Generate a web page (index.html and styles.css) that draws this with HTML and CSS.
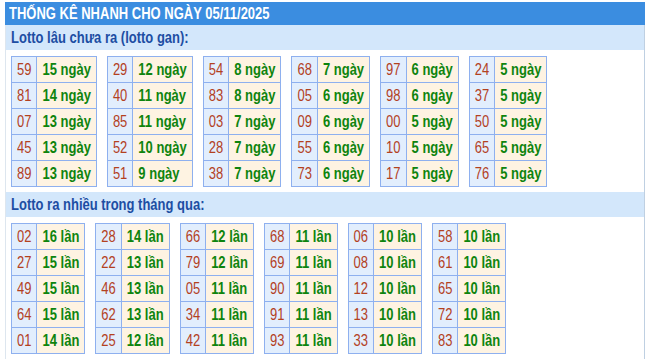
FILE: index.html
```html
<!DOCTYPE html>
<html lang="vi">
<head>
<meta charset="utf-8">
<title>Thống kê nhanh</title>
<link rel="stylesheet" href="styles.css">
</head>
<body>
<div class="box">
  <div class="title"><span class="s">THỐNG KÊ NHANH CHO NGÀY 05/11/2025</span></div>
  <div class="sub"><span class="s">Lotto lâu chưa ra (lotto gan):</span></div>
  <div class="tables">
    <table class="t"><tr><td class="n"><span class="s">59</span></td><td class="v"><span class="s">15 ngày</span></td></tr><tr><td class="n"><span class="s">81</span></td><td class="v"><span class="s">14 ngày</span></td></tr><tr><td class="n"><span class="s">07</span></td><td class="v"><span class="s">13 ngày</span></td></tr><tr><td class="n"><span class="s">45</span></td><td class="v"><span class="s">13 ngày</span></td></tr><tr><td class="n"><span class="s">89</span></td><td class="v"><span class="s">13 ngày</span></td></tr></table>
    <table class="t"><tr><td class="n"><span class="s">29</span></td><td class="v"><span class="s">12 ngày</span></td></tr><tr><td class="n"><span class="s">40</span></td><td class="v"><span class="s">11 ngày</span></td></tr><tr><td class="n"><span class="s">85</span></td><td class="v"><span class="s">11 ngày</span></td></tr><tr><td class="n"><span class="s">52</span></td><td class="v"><span class="s">10 ngày</span></td></tr><tr><td class="n"><span class="s">51</span></td><td class="v"><span class="s">9 ngày</span></td></tr></table>
    <table class="t"><tr><td class="n"><span class="s">54</span></td><td class="v"><span class="s">8 ngày</span></td></tr><tr><td class="n"><span class="s">83</span></td><td class="v"><span class="s">8 ngày</span></td></tr><tr><td class="n"><span class="s">03</span></td><td class="v"><span class="s">7 ngày</span></td></tr><tr><td class="n"><span class="s">28</span></td><td class="v"><span class="s">7 ngày</span></td></tr><tr><td class="n"><span class="s">38</span></td><td class="v"><span class="s">7 ngày</span></td></tr></table>
    <table class="t"><tr><td class="n"><span class="s">68</span></td><td class="v"><span class="s">7 ngày</span></td></tr><tr><td class="n"><span class="s">05</span></td><td class="v"><span class="s">6 ngày</span></td></tr><tr><td class="n"><span class="s">09</span></td><td class="v"><span class="s">6 ngày</span></td></tr><tr><td class="n"><span class="s">55</span></td><td class="v"><span class="s">6 ngày</span></td></tr><tr><td class="n"><span class="s">73</span></td><td class="v"><span class="s">6 ngày</span></td></tr></table>
    <table class="t"><tr><td class="n"><span class="s">97</span></td><td class="v"><span class="s">6 ngày</span></td></tr><tr><td class="n"><span class="s">98</span></td><td class="v"><span class="s">6 ngày</span></td></tr><tr><td class="n"><span class="s">00</span></td><td class="v"><span class="s">5 ngày</span></td></tr><tr><td class="n"><span class="s">10</span></td><td class="v"><span class="s">5 ngày</span></td></tr><tr><td class="n"><span class="s">17</span></td><td class="v"><span class="s">5 ngày</span></td></tr></table>
    <table class="t"><tr><td class="n"><span class="s">24</span></td><td class="v"><span class="s">5 ngày</span></td></tr><tr><td class="n"><span class="s">37</span></td><td class="v"><span class="s">5 ngày</span></td></tr><tr><td class="n"><span class="s">50</span></td><td class="v"><span class="s">5 ngày</span></td></tr><tr><td class="n"><span class="s">65</span></td><td class="v"><span class="s">5 ngày</span></td></tr><tr><td class="n"><span class="s">76</span></td><td class="v"><span class="s">5 ngày</span></td></tr></table>
  </div>
  <div class="sub"><span class="s">Lotto ra nhiều trong tháng qua:</span></div>
  <div class="tables">
    <table class="t"><tr><td class="n"><span class="s">02</span></td><td class="v"><span class="s">16 lần</span></td></tr><tr><td class="n"><span class="s">27</span></td><td class="v"><span class="s">15 lần</span></td></tr><tr><td class="n"><span class="s">49</span></td><td class="v"><span class="s">15 lần</span></td></tr><tr><td class="n"><span class="s">64</span></td><td class="v"><span class="s">15 lần</span></td></tr><tr><td class="n"><span class="s">01</span></td><td class="v"><span class="s">14 lần</span></td></tr></table>
    <table class="t"><tr><td class="n"><span class="s">28</span></td><td class="v"><span class="s">14 lần</span></td></tr><tr><td class="n"><span class="s">22</span></td><td class="v"><span class="s">13 lần</span></td></tr><tr><td class="n"><span class="s">46</span></td><td class="v"><span class="s">13 lần</span></td></tr><tr><td class="n"><span class="s">62</span></td><td class="v"><span class="s">13 lần</span></td></tr><tr><td class="n"><span class="s">25</span></td><td class="v"><span class="s">12 lần</span></td></tr></table>
    <table class="t"><tr><td class="n"><span class="s">66</span></td><td class="v"><span class="s">12 lần</span></td></tr><tr><td class="n"><span class="s">79</span></td><td class="v"><span class="s">12 lần</span></td></tr><tr><td class="n"><span class="s">05</span></td><td class="v"><span class="s">11 lần</span></td></tr><tr><td class="n"><span class="s">34</span></td><td class="v"><span class="s">11 lần</span></td></tr><tr><td class="n"><span class="s">42</span></td><td class="v"><span class="s">11 lần</span></td></tr></table>
    <table class="t"><tr><td class="n"><span class="s">68</span></td><td class="v"><span class="s">11 lần</span></td></tr><tr><td class="n"><span class="s">69</span></td><td class="v"><span class="s">11 lần</span></td></tr><tr><td class="n"><span class="s">90</span></td><td class="v"><span class="s">11 lần</span></td></tr><tr><td class="n"><span class="s">91</span></td><td class="v"><span class="s">11 lần</span></td></tr><tr><td class="n"><span class="s">93</span></td><td class="v"><span class="s">11 lần</span></td></tr></table>
    <table class="t"><tr><td class="n"><span class="s">06</span></td><td class="v"><span class="s">10 lần</span></td></tr><tr><td class="n"><span class="s">08</span></td><td class="v"><span class="s">10 lần</span></td></tr><tr><td class="n"><span class="s">12</span></td><td class="v"><span class="s">10 lần</span></td></tr><tr><td class="n"><span class="s">13</span></td><td class="v"><span class="s">10 lần</span></td></tr><tr><td class="n"><span class="s">33</span></td><td class="v"><span class="s">10 lần</span></td></tr></table>
    <table class="t"><tr><td class="n"><span class="s">58</span></td><td class="v"><span class="s">10 lần</span></td></tr><tr><td class="n"><span class="s">61</span></td><td class="v"><span class="s">10 lần</span></td></tr><tr><td class="n"><span class="s">65</span></td><td class="v"><span class="s">10 lần</span></td></tr><tr><td class="n"><span class="s">72</span></td><td class="v"><span class="s">10 lần</span></td></tr><tr><td class="n"><span class="s">83</span></td><td class="v"><span class="s">10 lần</span></td></tr></table>
  </div>
</div>
</body>
</html>
```
FILE: styles.css
```css
html, body {
  margin: 0;
  padding: 0;
  background: #ffffff;
}
body {
  font-family: "Liberation Sans", Arial, sans-serif;
  font-size: 13px;
}
.s {
  display: inline-block;
  transform: scaleY(1.22);
}
.box {
  margin: 2px 5px 0 5px;
  border-right: 1px solid #bfd0e2;
  border-left: 1px solid #dde6ef;
  height: 357px;
  box-sizing: border-box;
}
.title {
  height: 23px;
  line-height: 23px;
  background: #3b8de0;
  color: #ffffff;
  font-weight: bold;
  padding-left: 4px;
  margin-left: -1px;
  margin-right: -1px;
}
.sub {
  height: 25px;
  line-height: 25px;
  background: #d3e7fb;
  color: #1d4ea3;
  font-weight: bold;
  padding-left: 5px;
}
.tables {
  display: flex;
  gap: 10px;
  padding: 6px 5px 5px 5px;
}
.t {
  border-collapse: collapse;
  border: 1px solid #8eb0ef;
}
.t td {
  border: 1px solid #8eb0ef;
  height: 26px;
  padding: 0 5px;
  line-height: 24px;
  box-sizing: border-box;
  white-space: nowrap;
}
.n {
  background: #e2eefd;
  color: #b3411f;
  text-align: center;
}
.v {
  background: #fef3e2;
  color: #0e840e;
  font-weight: bold;
  padding-left: 6px;
}
```
